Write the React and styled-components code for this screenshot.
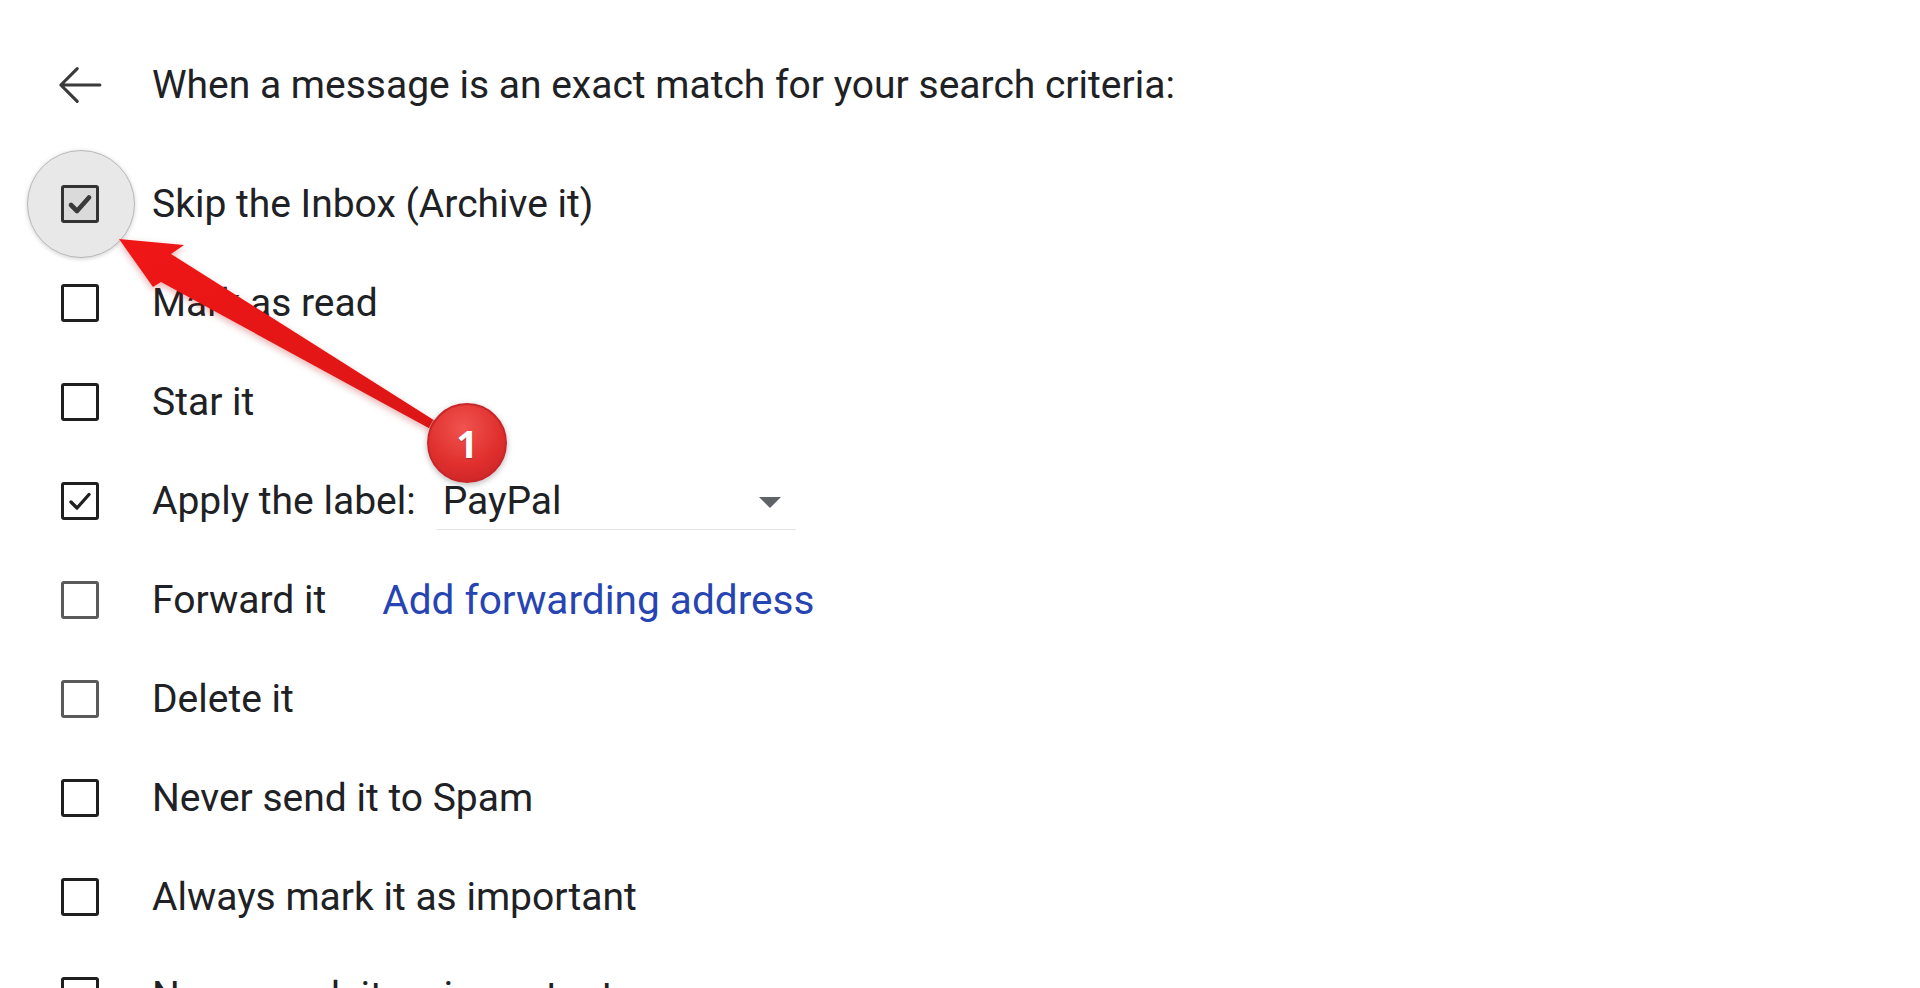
import React from 'react';
import styled, { createGlobalStyle } from 'styled-components';

const Global = createGlobalStyle`
  html, body { margin: 0; padding: 0; background: #ffffff; }
  body {
    font-family: Roboto, "Noto Sans", "Liberation Sans", sans-serif;
    color: #202124;
    overflow: hidden;
  }
`;

const Page = styled.div`
  position: relative;
  width: 1920px;
  height: 988px;
  overflow: hidden;
  box-sizing: border-box;
  padding-top: 35px;
  background: #fff;
`;

const Header = styled.div`
  display: flex;
  align-items: center;
  height: 99px;
  margin-bottom: 20px;
`;

const LeadCell = styled.div`
  position: relative;
  width: 152px;
  flex: none;
  box-sizing: border-box;
  padding-left: ${p => p.$pad || 61}px;
  display: flex;
  align-items: center;
  align-self: stretch;

  ${p => p.$highlighted && `
    &::before {
      content: '';
      position: absolute;
      left: 27px;
      top: calc(50% - 54px);
      width: 108px;
      height: 108px;
      border-radius: 50%;
      background: #e8e8e8;
      border: 1.5px solid #b9b9b9;
      box-sizing: border-box;
      box-shadow: 0 1px 4px rgba(0,0,0,0.18);
      z-index: 0;
    }
  `}
`;

const BackIcon = styled.svg`
  width: 56px;
  height: 56px;
  color: #3a3a3a;
`;

const Title = styled.div`
  font-size: 39px;
  color: #202124;
  white-space: nowrap;
`;

const List = styled.div`
  display: flex;
  flex-direction: column;
`;

const Row = styled.div`
  display: flex;
  align-items: center;
  height: 99px;
  flex: none;
`;

const Box = styled.div`
  position: relative;
  z-index: 1;
  width: 38px;
  height: 38px;
  box-sizing: border-box;
  border: 3px solid ${p => p.$border || '#1f1f1f'};
  border-radius: 3px;
  background: ${p => p.$fill || '#fff'};
  display: flex;
  align-items: center;
  justify-content: center;
`;

const Check = styled.svg`
  width: 30px;
  height: 30px;
`;

const Label = styled.span`
  font-size: 39px;
  color: #202124;
  white-space: nowrap;
`;

const Select = styled.div`
  margin-left: 21px;
  width: 359px;
  height: 56px;
  box-sizing: border-box;
  display: flex;
  align-items: center;
  justify-content: space-between;
  padding: 0 15px 0 6px;
  border-bottom: 1.5px solid #e4e4e4;
  font-size: 39px;
  color: #202124;
  margin-top: 2px;
`;

const Caret = styled.svg`
  width: 22px;
  height: 11px;
  margin-top: 2px;
`;

const Link = styled.a`
  margin-left: 56px;
  font-size: 40.6px;
  color: #2745b2;
  text-decoration: none;
  white-space: nowrap;
`;

const Overlay = styled.svg`
  position: absolute;
  left: 0;
  top: 0;
  width: 1920px;
  height: 988px;
  pointer-events: none;
  z-index: 5;
`;

const Badge = styled.div`
  position: absolute;
  left: 427px;
  top: 403px;
  width: 80px;
  height: 80px;
  box-sizing: border-box;
  border-radius: 50%;
  background: radial-gradient(circle at 45% 30%, #f0534e 0%, #e0302e 55%, #c41f23 100%);
  border: 2px solid #c8262a;
  box-shadow: 0 2px 6px rgba(0,0,0,0.28), 0 0 0 1px rgba(255,255,255,0.5);
  display: flex;
  align-items: center;
  justify-content: center;
  color: #fff;
  font-family: "Open Sans", Roboto, "Liberation Sans", sans-serif;
  font-weight: 700;
  font-size: 38px;
  line-height: 1;
  text-shadow: 0 1px 1px rgba(0,0,0,0.25);
  z-index: 6;
`;

const CheckMark = ({ color, weight }) => (
  <Check viewBox="0 0 30 30">
    <polyline
      points="6,16 12,22 24,8.5"
      fill="none"
      stroke={color}
      strokeWidth={weight}
      strokeLinecap="round"
      strokeLinejoin="round"
    />
  </Check>
);

const CheckBox = ({ checked, border, fill, checkColor, checkWeight }) => (
  <Box $border={border} $fill={fill}>
    {checked && <CheckMark color={checkColor || '#1f1f1f'} weight={checkWeight || 3.3} />}
  </Box>
);

const rows = [
  { text: 'Skip the Inbox (Archive it)', checked: true, highlighted: true, border: '#333', fill: '#dadada', checkColor: '#3a3a3a', checkWeight: 4.6 },
  { text: 'Mark as read' },
  { text: 'Star it' },
  { text: 'Apply the label:', checked: true, select: 'PayPal' },
  { text: 'Forward it', border: '#5a5a5a', link: 'Add forwarding address' },
  { text: 'Delete it', border: '#5a5a5a' },
  { text: 'Never send it to Spam' },
  { text: 'Always mark it as important' },
  { text: 'Never mark it as important' },
];

export default function App() {
  return (
    <>
      <Global />
      <Page>
        <Header>
          <LeadCell $pad={52}>
            <BackIcon viewBox="0 0 24 24">
              <path
                d="M20.5 12H3.8M10.8 5L3.8 12l7 7"
                fill="none"
                stroke="currentColor"
                strokeWidth="1.35"
                strokeLinecap="round"
                strokeLinejoin="round"
              />
            </BackIcon>
          </LeadCell>
          <Title>When a message is an exact match for your search criteria:</Title>
        </Header>
        <List>
          {rows.map(r => (
            <Row key={r.text}>
              <LeadCell $highlighted={r.highlighted}>
                <CheckBox
                  checked={r.checked}
                  border={r.border}
                  fill={r.fill}
                  checkColor={r.checkColor}
                  checkWeight={r.checkWeight}
                />
              </LeadCell>
              <Label>{r.text}</Label>
              {r.select && (
                <Select>
                  <span>{r.select}</span>
                  <Caret viewBox="0 0 22 11">
                    <polygon points="0,0 22,0 11,11" fill="#5f6368" />
                  </Caret>
                </Select>
              )}
              {r.link && <Link href="#">{r.link}</Link>}
            </Row>
          ))}
        </List>

        <Overlay viewBox="0 0 1920 988">
          <defs>
            <filter id="arrowShadow" x="-20%" y="-20%" width="140%" height="140%">
              <feDropShadow dx="0" dy="3" stdDeviation="3.5" floodColor="#b00000" floodOpacity="0.3" />
            </filter>
            <linearGradient id="arrowFill" x1="0" y1="0" x2="1" y2="1">
              <stop offset="0" stopColor="#f01818" />
              <stop offset="1" stopColor="#dc1212" />
            </linearGradient>
          </defs>
          <polygon
            points="119,239 184,245 171,254 440,424 436,432 161,282 153,287"
            fill="url(#arrowFill)"
            filter="url(#arrowShadow)"
          />
        </Overlay>
        <Badge>1</Badge>
      </Page>
    </>
  );
}
